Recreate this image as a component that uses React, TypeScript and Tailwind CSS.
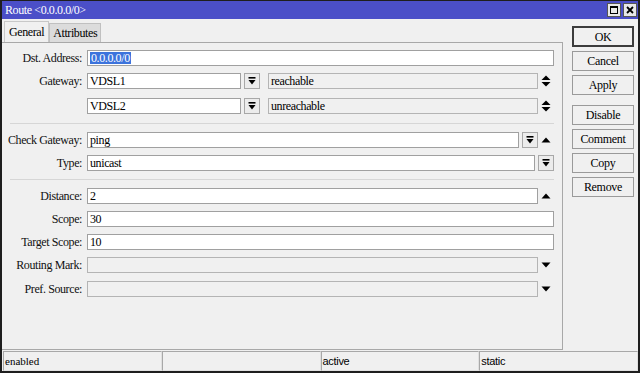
import React from "react";

const serif = { fontFamily: '"Liberation Serif", "Times New Roman", serif' };

function DropBtn() {
  return (
    <div className="w-[16px] h-[16px] shrink-0 border border-[#a8a8a8] bg-[#ececec] flex items-center justify-center">
      <svg width="8" height="8" viewBox="0 0 8 8">
        <rect x="0.5" y="0" width="7" height="1.6" fill="#000" />
        <polygon points="0.5,3 7.5,3 4,7.5" fill="#000" />
      </svg>
    </div>
  );
}

function UpDown() {
  return (
    <svg width="10" height="12" viewBox="0 0 10 12">
      <polygon points="0.5,5 9.5,5 5,0.5" fill="#000" />
      <polygon points="0.5,7 9.5,7 5,11.5" fill="#000" />
    </svg>
  );
}

function Up() {
  return (
    <svg width="10" height="6" viewBox="0 0 10 6">
      <polygon points="0.5,5.5 9.5,5.5 5,0.5" fill="#000" />
    </svg>
  );
}

function Down() {
  return (
    <svg width="10" height="6" viewBox="0 0 10 6">
      <polygon points="0.5,0.5 9.5,0.5 5,5.5" fill="#000" />
    </svg>
  );
}

function IconCell({ children }: { children?: React.ReactNode }) {
  return <div className="w-[16px] h-[16px] shrink-0 flex items-center justify-center">{children}</div>;
}

function Input({ value, gray, className = "", children }: { value?: string; gray?: boolean; className?: string; children?: React.ReactNode }) {
  return (
    <div
      className={`h-[16px] border ${gray ? "border-[#b4b4b4] bg-[#f0f0f0]" : "border-[#a0a0a0] bg-white"} flex items-center pl-[2px] text-[12px] tracking-[-0.4px] leading-none text-black overflow-hidden ${className}`}
    >
      {children ?? value}
    </div>
  );
}

function Row({ label, mt, children }: { label: string; mt: string; children: React.ReactNode }) {
  return (
    <div className={`flex items-center h-[16px] ${mt}`}>
      <div className="w-[80px] shrink-0 text-right text-[12px] tracking-[-0.4px] leading-none text-[#111]">{label}</div>
      <div className="ml-[5px] flex-1 flex items-center">{children}</div>
    </div>
  );
}

function Btn({ label, def, mt }: { label: string; def?: boolean; mt: string }) {
  return (
    <div
      className={`${mt} w-[62px] ${def ? "h-[21px] border-2 border-[#3c3c3c]" : "h-[20px] border border-[#9a9a9a]"} bg-[#f0f0f0] flex items-center justify-center text-[12px] tracking-[-0.3px] leading-none text-black`}
    >
      {label}
    </div>
  );
}

function Status({ text, sans }: { text?: string; sans?: boolean }) {
  return (
    <div
      className="flex-1 h-[20px] border border-t-[#a8a8a8] border-l-[#a8a8a8] border-r-[#e0e0e0] border-b-[#e0e0e0] bg-[#f0f0f0] flex items-center pl-[1px] text-[11px] leading-none text-black"
      style={sans ? { fontFamily: '"Liberation Sans", Arial, sans-serif', letterSpacing: "-0.3px" } : undefined}
    >
      {text}
    </div>
  );
}

export default function App() {
  return (
    <div
      className="w-[640px] h-[373px] bg-[#f0f0f0] border-x-2 border-b-2 border-t border-[#1e1e1e] flex flex-col overflow-hidden"
      style={serif}
    >
      {/* Title bar */}
      <div className="h-[18px] shrink-0 bg-[#4b4fc8] flex items-center pl-[3px] pr-[1px]">
        <div className="text-white text-[12px] tracking-[-0.4px] leading-none">Route &lt;0.0.0.0/0&gt;</div>
        <div className="ml-auto flex gap-[2px]">
          <div className="w-[14px] h-[14px] bg-[#e8e8e8] border border-[#555] flex items-center justify-center">
            <div className="w-[8px] h-[8px] border border-black border-t-2" />
          </div>
          <div className="w-[14px] h-[14px] bg-[#e8e8e8] border border-[#555] flex items-center justify-center">
            <svg width="8" height="8" viewBox="0 0 8 8">
              <path d="M1 1 L7 7 M7 1 L1 7" stroke="#000" strokeWidth="1.8" />
            </svg>
          </div>
        </div>
      </div>

      {/* Body */}
      <div className="flex-1 flex min-h-0">
        <div className="w-[561px] shrink-0 flex flex-col">
          {/* Tabs */}
          <div className="h-[23px] shrink-0 flex items-end pl-[2px]">
            <div className="h-[21px] px-[4px] border border-b-0 border-[#c8c8c8] bg-[#f0f0f0] flex items-center text-[12px] tracking-[-0.4px] leading-none">General</div>
            <div className="h-[19px] px-[3px] border border-b-0 border-[#c0c0c0] bg-[#dcdcdc] flex items-center text-[12px] tracking-[-0.4px] leading-none">Attributes</div>
          </div>
          {/* Panel */}
          <div className="flex-1 border-t border-r border-b border-[#a8a8a8] pr-[8px] flex flex-col">
            <Row label="Dst. Address:" mt="mt-[7px]">
              <Input className="flex-1">
                <span className="bg-[#3c73dc] text-white px-[1px]">0.0.0.0/0</span>
              </Input>
            </Row>
            <Row label="Gateway:" mt="mt-[7px]">
              <Input value="VDSL1" className="w-[154px]" />
              <div className="ml-[3px]"><DropBtn /></div>
              <Input value="reachable" gray className="ml-[8px] flex-1" />
              <IconCell><UpDown /></IconCell>
            </Row>
            <Row label="" mt="mt-[9px]">
              <Input value="VDSL2" className="w-[154px]" />
              <div className="ml-[3px]"><DropBtn /></div>
              <Input value="unreachable" gray className="ml-[8px] flex-1" />
              <IconCell><UpDown /></IconCell>
            </Row>
            <div className="mt-[9px] ml-[8px] border-t border-[#d6d6d6]" />
            <Row label="Check Gateway:" mt="mt-[8px]">
              <Input value="ping" className="flex-1" />
              <div className="ml-[3px]"><DropBtn /></div>
              <IconCell><Up /></IconCell>
            </Row>
            <Row label="Type:" mt="mt-[7px]">
              <Input value="unicast" className="flex-1" />
              <div className="ml-[3px]"><DropBtn /></div>
            </Row>
            <div className="mt-[8px] ml-[8px] border-t border-[#d6d6d6]" />
            <Row label="Distance:" mt="mt-[8px]">
              <Input value="2" className="flex-1" />
              <IconCell><Up /></IconCell>
            </Row>
            <Row label="Scope:" mt="mt-[7px]">
              <Input value="30" className="flex-1" />
            </Row>
            <Row label="Target Scope:" mt="mt-[7px]">
              <Input value="10" className="flex-1" />
            </Row>
            <Row label="Routing Mark:" mt="mt-[7px]">
              <Input gray className="flex-1" />
              <IconCell><Down /></IconCell>
            </Row>
            <Row label="Pref. Source:" mt="mt-[8px]">
              <Input gray className="flex-1" />
              <IconCell><Down /></IconCell>
            </Row>
          </div>
        </div>
        {/* Buttons */}
        <div className="flex-1 pl-[9px] flex flex-col">
          <Btn label="OK" def mt="mt-[7px]" />
          <Btn label="Cancel" mt="mt-[4px]" />
          <Btn label="Apply" mt="mt-[4px]" />
          <Btn label="Disable" mt="mt-[10px]" />
          <Btn label="Comment" mt="mt-[4px]" />
          <Btn label="Copy" mt="mt-[4px]" />
          <Btn label="Remove" mt="mt-[4px]" />
        </div>
      </div>

      {/* Status bar */}
      <div className="h-[21px] shrink-0 flex pt-[1px] pl-[1px] pr-[0px]">
        <Status text="enabled" />
        <Status />
        <Status text="active" sans />
        <Status text="static" sans />
      </div>
    </div>
  );
}
